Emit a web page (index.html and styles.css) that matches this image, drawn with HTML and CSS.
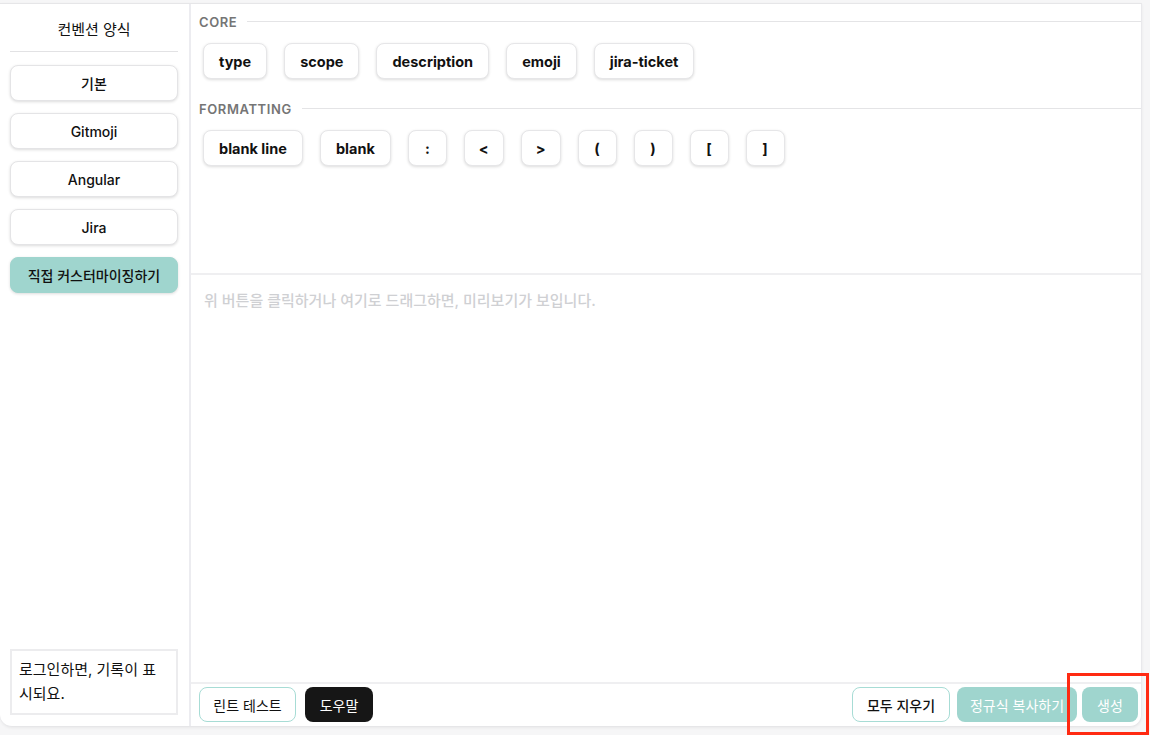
FILE: index.html
```html
<!DOCTYPE html>
<html lang="ko">
<head>
<meta charset="utf-8">
<title>Convention</title>
<link rel="stylesheet" href="styles.css">
</head>
<body>
<div class="app">
  <aside class="sidebar">
    <div class="side-title">컨벤션 양식</div>
    <div class="side-list">
      <button class="side-btn">기본</button>
      <button class="side-btn">Gitmoji</button>
      <button class="side-btn">Angular</button>
      <button class="side-btn">Jira</button>
      <button class="side-btn active">직접 커스터마이징하기</button>
    </div>
    <div class="history">로그인하면, 기록이 표시되요.</div>
  </aside>
  <main class="main">
    <div class="palette">
      <section class="group">
        <div class="group-label"><span>CORE</span><i class="rule"></i></div>
        <div class="chips">
          <span class="chip">type</span>
          <span class="chip">scope</span>
          <span class="chip">description</span>
          <span class="chip">emoji</span>
          <span class="chip">jira-ticket</span>
        </div>
      </section>
      <section class="group">
        <div class="group-label"><span>FORMATTING</span><i class="rule"></i></div>
        <div class="chips">
          <span class="chip">blank line</span>
          <span class="chip">blank</span>
          <span class="chip sym">:</span>
          <span class="chip sym">&lt;</span>
          <span class="chip sym">&gt;</span>
          <span class="chip sym">(</span>
          <span class="chip sym">)</span>
          <span class="chip sym">[</span>
          <span class="chip sym">]</span>
        </div>
      </section>
    </div>
    <div class="preview">위 버튼을 클릭하거나 여기로 드래그하면, 미리보기가 보입니다.</div>
    <footer class="footer">
      <div class="foot-group">
        <button class="btn outline">린트 테스트</button>
        <button class="btn dark">도우말</button>
      </div>
      <div class="foot-group right">
        <button class="btn outline strong">모두 지우기</button>
        <button class="btn teal wide">정규식 복사하기</button>
        <button class="btn teal">생성</button>
      </div>
    </footer>
  </main>
  <div class="highlight"></div>
</div>
</body>
</html>
```
FILE: styles.css
```css
* { box-sizing: border-box; }
html, body { margin: 0; padding: 0; }
body {
  background: #f6f6f7;
  font-family: Inter, "Noto Sans CJK KR", "Noto Sans", sans-serif;
  color: #111;
  width: 1150px;
  height: 735px;
  overflow: hidden;
}
button { font-family: inherit; cursor: pointer; white-space: nowrap; }

.app {
  position: relative;
  margin-top: 3px;
  width: 1142px;
  height: 724px;
  background: #fff;
  display: flex;
  border-top: 1px solid #e6e6e8;
  border-right: 1px solid #e9e9ec;
  border-bottom: 1px solid #e6e6e8;
  border-radius: 0 0 12px 12px;
  box-shadow: 0 1px 3px rgba(0,0,0,0.06);
}

/* sidebar */
.sidebar {
  width: 191px;
  flex: none;
  border-right: 2px solid #ececf0;
  display: flex;
  flex-direction: column;
  padding: 0 11px 11px 10px;
}
.side-title {
  height: 48px;
  border-bottom: 1px solid #e2e2e4;
  display: flex;
  align-items: center;
  justify-content: center;
  font-size: 15px;
  color: #111;
  padding-top: 2px;
}
.side-list {
  display: flex;
  flex-direction: column;
  gap: 12px;
  padding-top: 13px;
  flex: 1;
}
.side-btn {
  height: 36px;
  background: #fff;
  border: 1px solid #e4e4e6;
  border-radius: 8px;
  box-shadow: 0 1px 3px rgba(0,0,0,0.14);
  font-size: 14px;
  font-weight: 500;
  color: #111;
}
.side-btn.active {
  background: #9fd5ce;
  border-color: #9fd5ce;
}
.history {
  height: 66px;
  border: 2px solid #ececee;
  padding: 7px 7px;
  font-size: 15px;
  line-height: 24px;
  font-weight: 400;
  color: #111;
}

/* main */
.main {
  flex: 1;
  display: flex;
  flex-direction: column;
  min-width: 0;
}
.palette {
  height: 271px;
  border-bottom: 2px solid #efeff1;
  padding: 9px 0 0 8px;
}
.group { margin-bottom: 21px; }
.group-label {
  display: flex;
  align-items: center;
  gap: 10px;
  font-size: 13px;
  font-weight: 600;
  color: #757575;
  letter-spacing: 0.6px;
  height: 17px;
}
.rule {
  flex: 1;
  height: 1px;
  background: #e4e4e6;
}
.chips {
  display: flex;
  gap: 17px;
  padding: 13px 0 0 4px;
}
.chip {
  height: 36px;
  display: inline-flex;
  align-items: center;
  padding: 0 15px;
  border: 1px solid #e6e6e8;
  border-radius: 8px;
  box-shadow: 0 1px 3px rgba(0,0,0,0.14);
  font-size: 14.5px;
  font-weight: 700;
  color: #111;
  background: #fff;
}
.chip.sym { padding: 0 14px; min-width: 39px; justify-content: center; }

.preview {
  flex: 1;
  padding: 14px 13px;
  font-size: 15px;
  font-weight: 500;
  color: #cfd0d3;
}

.footer {
  height: 44px;
  border-top: 2px solid #efeff1;
  display: flex;
  justify-content: space-between;
  align-items: center;
  padding: 0 3px 1px 8px;
}
.foot-group { display: flex; gap: 9px; }
.foot-group.right { gap: 7px; }
.foot-group.right .btn.teal + .btn.teal { margin-left: -2px; }
.btn {
  height: 35px;
  border-radius: 8px;
  font-size: 14px;
  font-weight: 400;
  padding: 0;
  border: 1px solid transparent;
}
.btn.outline {
  background: #fff;
  border-color: #a7dcd5;
  color: #111;
  width: 97px;
}
.btn.strong { width: 98px; font-weight: 500; }
.btn.dark {
  background: #161616;
  color: #fff;
  width: 68px;
}
.btn.teal {
  background: #9fd5ce;
  color: #fff;
  width: 56px;
}
.btn.teal.wide { width: 120px; }

.highlight {
  position: absolute;
  left: 1067px;
  top: 669px;
  width: 82px;
  height: 62px;
  border: 3px solid #ff2a12;
}
```
